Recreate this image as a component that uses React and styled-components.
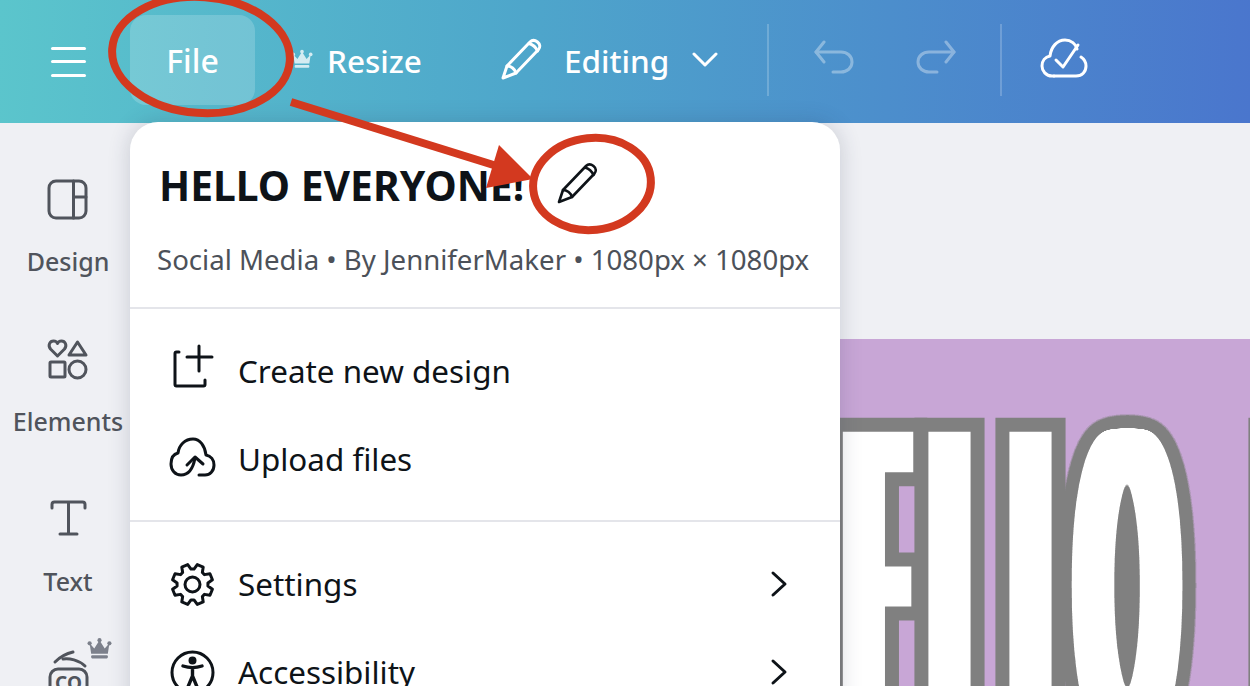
import React from 'react'
import styled, {createGlobalStyle} from 'styled-components'

const Global = createGlobalStyle`
  html, body {
    margin: 0;
    padding: 0;
    background: #eff0f4;
  }
  * {
    box-sizing: border-box;
  }
`

const Page = styled.div`
  position: relative;
  width: 1250px;
  height: 686px;
  overflow: hidden;
  font-family: 'Noto Sans', 'Open Sans', sans-serif;
  background: #eff0f4;
`

const Header = styled.header`
  height: 123px;
  display: flex;
  align-items: center;
  padding-left: 51px;
  color: #fff;
  background: linear-gradient(92deg, #5bc5cc 0%, #4ea6cb 42%, #4a76cd 100%);
`

const Burger = styled.div`
  width: 35px;
  height: 30px;
  margin-right: 44px;
  display: flex;
  flex-direction: column;
  justify-content: space-between;
  span {
    display: block;
    height: 3px;
    border-radius: 2px;
    background: #fff;
  }
`

const FileButton = styled.div`
  width: 125px;
  height: 90px;
  margin-top: -3px;
  border-radius: 16px;
  background: rgba(255, 255, 255, 0.18);
  display: flex;
  align-items: center;
  justify-content: center;
  font-size: 32px;
  font-weight: 500;
`

const HeaderLabel = styled.span`
  font-size: 31.5px;
  font-weight: 500;
  margin-bottom: 2px;
  margin-left: ${props => props.$left || 0}px;
`

const HeaderIcon = styled.svg`
  display: block;
  flex: none;
  margin-left: ${props => props.$left || 0}px;
  margin-bottom: ${props => props.$lift || 0}px;
  opacity: ${props => (props.$dim ? 0.35 : 1)};
`

const HeaderDivider = styled.div`
  width: 2px;
  height: 72px;
  margin-bottom: 4px;
  margin-left: ${props => props.$left}px;
  background: rgba(255, 255, 255, 0.2);
`

const Main = styled.div`
  display: flex;
  height: 563px;
`

const Sidebar = styled.nav`
  width: 130px;
  flex: none;
  padding: 56px 0 0 6px;
  display: flex;
  flex-direction: column;
  align-items: center;
`

const SideItem = styled.div`
  position: relative;
  height: 160px;
  flex: none;
  display: flex;
  flex-direction: column;
  align-items: center;
  color: #50545c;
`

const SideIconBox = styled.div`
  height: 68px;
  display: flex;
  align-items: flex-start;
  svg {
    overflow: visible;
  }
`

const SideLabel = styled.span`
  font-size: 25px;
  font-weight: 500;
  line-height: 28px;
`

const SideBadge = styled.div`
  position: absolute;
  top: -21px;
  left: 39px;
`

const Workspace = styled.main`
  flex: 1;
  padding-top: 216px;
  display: flex;
`

const Artboard = styled.div`
  flex: 1;
  background: #c8a6d6;
  overflow: hidden;
`

const Menu = styled.div`
  position: absolute;
  left: 130px;
  top: 122px;
  width: 710px;
  height: 640px;
  border-radius: 28px;
  background: #fff;
  box-shadow: 0 0 22px rgba(40, 50, 80, 0.2);
  color: #0e1318;
`

const MenuHead = styled.div`
  height: 187px;
  padding: 36px 0 0 27px;
  border-bottom: 2px solid #e4e5ea;
`

const TitleRow = styled.div`
  display: flex;
  align-items: center;
  padding-left: 2px;
  height: 54px;
`

const Title = styled.h1`
  margin: 0;
  font-size: 40.8px;
  font-weight: 700;
  line-height: 54px;
`

const Subtitle = styled.p`
  margin: 29px 0 0;
  font-size: 27.6px;
  line-height: 36px;
  color: #4c5159;
  white-space: nowrap;
`

const MenuSection = styled.div`
  padding: ${props => (props.$last ? '18px 52px 0 40px' : '18px 52px 17px 40px')};
  border-bottom: ${props => (props.$last ? 'none' : '2px solid #e4e5ea')};
`

const MenuItem = styled.div`
  height: 88px;
  display: flex;
  align-items: center;
`

const MenuIcon = styled.div`
  width: 45px;
  height: 45px;
  margin-right: 23px;
  flex: none;
  svg {
    overflow: visible;
  }
`

const MenuLabel = styled.span`
  flex: 1;
  font-size: 31.4px;
  margin-bottom: 2px;
`

const Overlay = styled.svg`
  position: absolute;
  left: 0;
  top: 0;
  pointer-events: none;
`

const Line = {
  fill: 'none',
  stroke: 'currentColor',
  strokeWidth: 3,
  strokeLinecap: 'round',
  strokeLinejoin: 'round',
}

const Crown = ({w, h, color}) => (
  <svg width={w} height={h} viewBox="0 0 24 20" fill={color}>
    <circle cx="2.5" cy="5" r="2" />
    <circle cx="12" cy="2" r="2" />
    <circle cx="21.5" cy="5" r="2" />
    <path d="M2.5 5 7 10 12 2l5 8 4.500-5L20 15H4z" />
    <rect x="4" y="16.500" width="16" height="3" rx="1" />
  </svg>
)

const Pencil = ({size, stroke}) => (
  <svg width={size} height={size} viewBox="0 0 42 42" fill="none" stroke="currentColor" strokeWidth={stroke} strokeLinejoin="round" strokeLinecap="round">
    <path d="M2 40 6 28 29 4c2-2 5-2 7.500 0s3 5 1 7.500L15 35z" />
    <path d="M6 28c4 0 8 3 9 7" />
    <path d="M28 5.500c3.500 1 7 4 8.500 7.500" />
  </svg>
)

const Chevron = () => (
  <svg width="18" height="28" viewBox="0 0 18 28" fill="none" stroke="currentColor" strokeWidth="3" strokeLinecap="round" strokeLinejoin="round">
    <path d="M3 3 15 14 3 25" />
  </svg>
)

// eight-tooth cog outline, worked out from the angles
const cogPath = () => {
  const pt = (r, deg) => {
    const a = (deg * Math.PI) / 180
    return `${(22.5 + r * Math.cos(a)).toFixed(2)} ${(22.5 + r * Math.sin(a)).toFixed(2)}`
  }
  const parts = []
  for (let i = 0; i < 8; i++) {
    const c = i * 45 + 22.5
    parts.push(pt(15.5, c - 17), pt(20.5, c - 9), pt(20.5, c + 9), pt(15.5, c + 17))
  }
  return `M${parts.join('L')}z`
}

// big poster lettering, real text thickened by a morphology filter
const ArtFilter = ({id, rx, ry}) => (
  <filter id={id} filterUnits="userSpaceOnUse" x="130" y="339" width="1130" height="460" colorInterpolationFilters="sRGB">
    <feMorphology in="SourceAlpha" operator="dilate" radius={`${rx + 14} ${ry + 14}`} result="outer" />
    <feFlood floodColor="#808080" />
    <feComposite in2="outer" operator="in" result="edge" />
    <feMorphology in="SourceAlpha" operator="dilate" radius={`${rx} ${ry}`} result="inner" />
    <feFlood floodColor="#ffffff" />
    <feComposite in2="inner" operator="in" result="face" />
    <feMerge>
      <feMergeNode in="edge" />
      <feMergeNode in="face" />
    </feMerge>
  </filter>
)

// same idea for the round letter: dilate, blur and threshold keeps the curves round
const RoundFilter = ({id}) => (
  <filter id={id} filterUnits="userSpaceOnUse" x="130" y="339" width="1130" height="460" colorInterpolationFilters="sRGB">
    <feMorphology in="SourceAlpha" operator="dilate" radius="9 1" />
    <feGaussianBlur stdDeviation="5.5 1" />
    <feComponentTransfer result="inner">
      <feFuncA type="linear" slope="30" intercept="-2.5" />
    </feComponentTransfer>
    <feGaussianBlur in="inner" stdDeviation="7.8" />
    <feComponentTransfer result="outer">
      <feFuncA type="linear" slope="40" intercept="-0.95" />
    </feComponentTransfer>
    <feFlood floodColor="#808080" />
    <feComposite in2="outer" operator="in" result="edge" />
    <feFlood floodColor="#ffffff" />
    <feComposite in2="inner" operator="in" result="face" />
    <feMerge>
      <feMergeNode in="edge" />
      <feMergeNode in="face" />
    </feMerge>
  </filter>
)

const Letter = ({x, y, sx, sy, weight, filter, children}) => (
  <g filter={`url(#${filter})`}>
    <text
      transform={`translate(${x} ${y}) scale(${sx} ${sy})`}
      fontFamily="'Liberation Sans', sans-serif"
      fontSize="100"
      fontWeight={weight}
    >
      {children}
    </text>
  </g>
)

const Art = () => (
  <svg width="1120" height="347" viewBox="130 339 1120 347" style={{display: 'block'}}>
    <defs>
      <ArtFilter id="thin" rx={18} ry={2.5} />
      <RoundFilter id="round" />
    </defs>
    <Letter x={855.4} y={747} sx={0.66} sy={4.54} weight={400} filter="thin">E</Letter>
    <Letter x={941} y={747} sx={0.66} sy={4.54} weight={400} filter="thin">L</Letter>
    <Letter x={1022} y={747} sx={0.66} sy={4.54} weight={400} filter="thin">L</Letter>
    <Letter x={1082} y={738} sx={1.16} sy={4.4} weight={400} filter="round">O</Letter>
    <Letter x={1275} y={747} sx={0.66} sy={4.54} weight={400} filter="thin">E</Letter>
  </svg>
)

const sideItems = [
  {
    label: 'Design',
    icon: (
      <svg width="41" height="41" viewBox="0 0 41 41" {...Line}>
        <rect x="2" y="2" width="37" height="37" rx="7" />
        <path d="M26.500 2v37M26.500 18H39" />
      </svg>
    ),
  },
  {
    label: 'Elements',
    icon: (
      <svg width="41" height="41" viewBox="0 0 41 41" {...Line}>
        <path d="M10.500 17 3.500 10C.5 6 3 2 6.500 2c2 0 3.500 1 4 2.500C11 3 12.500 2 14.500 2c3.500 0 6 4 3 8z" />
        <path d="M30.500 3 39 16H22z" />
        <rect x="3" y="23" width="15" height="15" rx="1" />
        <circle cx="30.500" cy="30.500" r="8.500" />
      </svg>
    ),
  },
  {
    label: 'Text',
    icon: (
      <svg width="41" height="41" viewBox="0 0 41 41" {...Line}>
        <path d="M4 9V5.500C4 4 5 3 6.500 3h28C36 3 37 4 37 5.500V9M20.500 3v32M12 35h17" />
      </svg>
    ),
  },
]

export default function App() {
  return (
    <Page>
      <Global />
      <Header>
        <Burger>
          <span />
          <span />
          <span />
        </Burger>
        <FileButton>File</FileButton>
        <HeaderIcon as="div" $left={36} style={{opacity: 0.75}}>
          <Crown w={22} h={20} color="#fff" />
        </HeaderIcon>
        <HeaderLabel $left={14}>Resize</HeaderLabel>
        <HeaderIcon as="div" $left={79}>
          <Pencil size={42} stroke={3} />
        </HeaderIcon>
        <HeaderLabel $left={21}>Editing</HeaderLabel>
        <HeaderIcon width="26" height="16" viewBox="0 0 26 16" $left={23} $lift={4} fill="none" stroke="currentColor" strokeWidth="3" strokeLinecap="round" strokeLinejoin="round">
          <path d="M2 2 13 13 24 2" />
        </HeaderIcon>
        <HeaderDivider $left={49} />
        <HeaderIcon width="40" height="34" viewBox="0 0 40 34" $left={45} $lift={10} $dim fill="none" stroke="currentColor" strokeWidth="3" strokeLinecap="round" strokeLinejoin="round">
          <path d="M2 12h25c6 0 11 4 11 10s-5 10-11 10h-8" />
          <path d="M10 2 2 12l8 10" />
        </HeaderIcon>
        <HeaderIcon width="40" height="34" viewBox="0 0 40 34" $left={62} $lift={10} $dim fill="none" stroke="currentColor" strokeWidth="3" strokeLinecap="round" strokeLinejoin="round">
          <path d="M38 12H13C7 12 2 16 2 22s5 10 11 10h8" />
          <path d="M30 2l8 10-8 10" />
        </HeaderIcon>
        <HeaderDivider $left={44} />
        <HeaderIcon width="48" height="40" viewBox="0 0 48 40" $left={38} $lift={8} fill="none" stroke="currentColor" strokeWidth="3" strokeLinecap="round" strokeLinejoin="round">
          <path d="M14 38H12C6 38 2 33 2 28c0-5 3-9 8-10C11 9 17 2 25 2c6 0 11 4 12 9" />
          <path d="M14 38h22c6 0 10-4 10-10 0-4-2-7-5-9" />
          <path d="M16 22l7 7L38 7" />
        </HeaderIcon>
      </Header>

      <Main>
        <Sidebar>
          {sideItems.map(item => (
            <SideItem key={item.label}>
              <SideIconBox>{item.icon}</SideIconBox>
              <SideLabel>{item.label}</SideLabel>
            </SideItem>
          ))}
          <SideItem>
            <SideBadge>
              <Crown w={25} h={21} color="#7c808b" />
            </SideBadge>
            <SideIconBox>
              <svg width="41" height="41" viewBox="0 0 41 41" {...Line}>
                <path d="M7 3C11-1 16-5 25-7" />
                <path d="M15 0C21-1 31 1 37 7" />
                <rect x="2" y="10" width="37" height="33" rx="8" />
                <text x="20.500" y="31" textAnchor="middle" fontSize="19" fontWeight="700" fill="currentColor" stroke="none" fontFamily="'Noto Sans', sans-serif">CO</text>
              </svg>
            </SideIconBox>
          </SideItem>
        </Sidebar>
        <Workspace>
          <Artboard>
            <Art />
          </Artboard>
        </Workspace>
      </Main>

      <Menu>
        <MenuHead>
          <TitleRow>
            <Title>HELLO EVERYONE!</Title>
            <HeaderIcon as="div" $left={33}>
              <Pencil size={42} stroke={2.6} />
            </HeaderIcon>
          </TitleRow>
          <Subtitle>Social Media • By JenniferMaker • 1080px × 1080px</Subtitle>
        </MenuHead>
        <MenuSection>
          <MenuItem>
            <MenuIcon>
              <svg width="45" height="45" viewBox="0 0 45 45" {...Line}>
                <path d="M9 3H6.500C5.500 3 5 3.500 5 4.500v31C5 36.500 5.500 37 6.500 37h27c1 0 1.500-.5 1.500-1.500V31" />
                <path d="M17 8h25M29-3v25" />
              </svg>
            </MenuIcon>
            <MenuLabel>Create new design</MenuLabel>
          </MenuItem>
          <MenuItem>
            <MenuIcon>
              <svg width="45" height="45" viewBox="0 0 45 45" {...Line}>
                <path d="M29 38h6c5 0 9-4 9-10 0-5-3-9-8-10C35 9 30 2 23 2 15 2 9 8 8 16 4 17 1 21 1 27c0 6 4 11 10 11 7 0 12-6 14-17" />
                <path d="M17 28l8-8 8 7" />
              </svg>
            </MenuIcon>
            <MenuLabel>Upload files</MenuLabel>
          </MenuItem>
        </MenuSection>
        <MenuSection $last>
          <MenuItem>
            <MenuIcon>
              <svg width="45" height="45" viewBox="0 0 45 45" {...Line}>
                <circle cx="22.500" cy="22.500" r="7.500" />
                <path d={cogPath()} />
              </svg>
            </MenuIcon>
            <MenuLabel>Settings</MenuLabel>
            <Chevron />
          </MenuItem>
          <MenuItem>
            <MenuIcon>
              <svg width="45" height="45" viewBox="0 0 45 45" {...Line}>
                <circle cx="22.500" cy="22.500" r="20.500" />
                <circle cx="22.500" cy="10.500" r="2.500" fill="currentColor" />
                <path d="M13 16c6 2 13 2 19 0M22.500 18v8M22.500 26l-5 12M22.500 26l5 12" strokeWidth="3.400" />
              </svg>
            </MenuIcon>
            <MenuLabel>Accessibility</MenuLabel>
            <Chevron />
          </MenuItem>
        </MenuSection>
      </Menu>

      <Overlay width="1250" height="686" viewBox="0 0 1250 686">
        <ellipse cx="201" cy="55" rx="89" ry="58" fill="none" stroke="#d3391f" strokeWidth="8" transform="rotate(4 201 55)" />
        <ellipse cx="592" cy="184" rx="59" ry="46" fill="none" stroke="#d3391f" strokeWidth="8" transform="rotate(-6 592 184)" />
        <path d="M291 102 500 167" fill="none" stroke="#d3391f" strokeWidth="8" />
        <path d="M499 145 533 179 486 188z" fill="#d3391f" />
      </Overlay>
    </Page>
  )
}
